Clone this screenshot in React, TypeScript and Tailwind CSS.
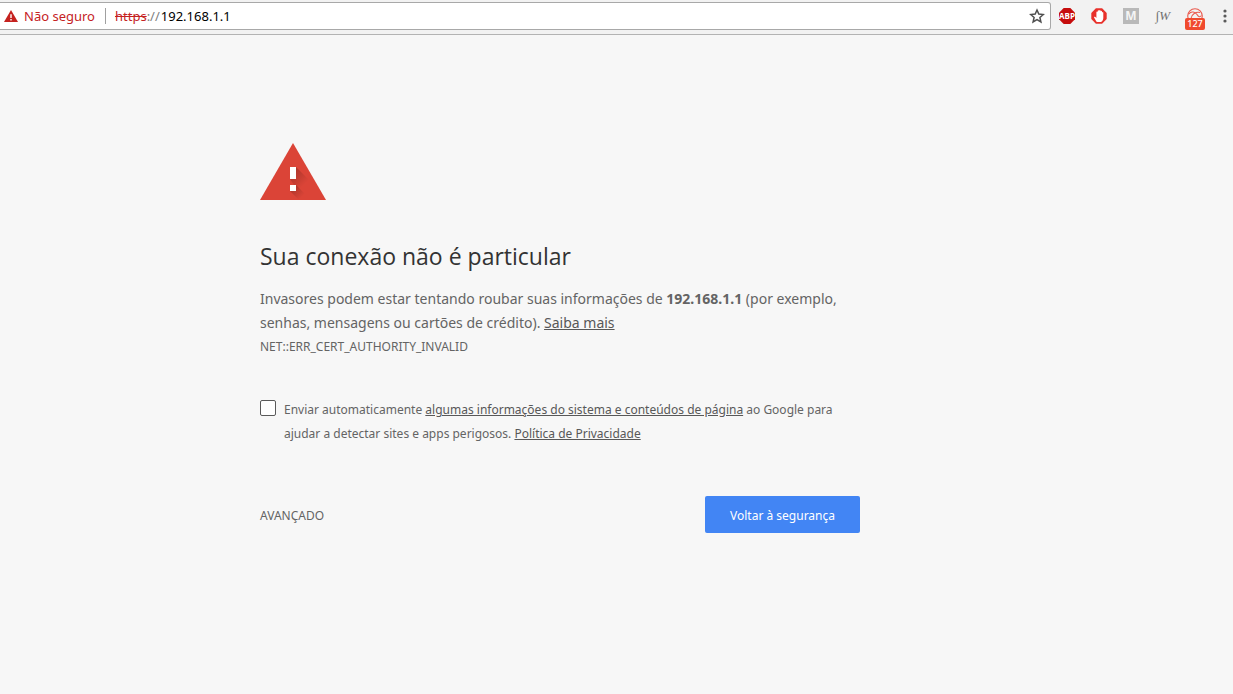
import React, { useState } from 'react';

interface ExtensionProps {
  label: string;
  children: React.ReactNode;
}

const Extension: React.FC<ExtensionProps> = ({ label, children }) => (
  <button type="button" aria-label={label} className="relative flex h-8 w-8 shrink-0 items-center justify-center">
    {children}
  </button>
);

const AdblockPlusIcon = () => (
  <svg viewBox="0 0 16 16" className="h-4 w-4">
    <path d="M4.7 0h6.6L16 4.7v6.6L11.3 16H4.7L0 11.3V4.7z" fill="#c60d0d" />
    <text x="8" y="10.8" textAnchor="middle" fill="#fff" fontSize="8" fontWeight="bold" fontFamily="Open Sans, sans-serif">ABP</text>
  </svg>
);

const AdblockIcon = () => (
  <svg viewBox="0 0 16 16" className="h-4 w-4">
    <path d="M4.9.3h6.2l4.6 4.6v6.2l-4.6 4.6H4.9L.3 11.1V4.9z" fill="#e8312b" />
    <path
      d="M5.500 13.700 3.200 9.800c-.5-.9.5-1.500 1.200-.8l1 1V4.200c0-.9 1.300-.9 1.300 0V3c0-1 1.400-1 1.400 0v-.2c0-1 1.500-1 1.500 0v.8c0-1 1.400-1 1.400 0v1.100c0-.9 1.300-.9 1.300 0v5.400c0 1.800-1 3.600-2.400 4H7.500c-.9 0-1.500 0-2-.4z"
      fill="#fff"
    />
  </svg>
);

const SpeedIcon = () => (
  <svg viewBox="0 0 16 16" className="h-4 w-4" fill="none" stroke="#ea5a4e" strokeWidth="1.100">
    <circle cx="8" cy="8" r="7.300" />
    <path d="M2 6C4 2.500 8.500 4 10 6.500s3 3 4.500 1M4 10.500C4.500 6 9 3.500 13 4.500" />
  </svg>
);

const StarIcon = () => (
  <svg viewBox="0 0 16 16" className="h-4 w-4">
    <path
      d="m8 2 1.800 4.100 4.500.4-3.400 3 1 4.400L8 11.600l-3.900 2.300 1-4.400-3.400-3 4.500-.4z"
      fill="none"
      stroke="#4f4f4f"
      strokeWidth="1.500"
    />
  </svg>
);

const Toolbar = () => {
  const [host, setHost] = useState('192.168.1.1');

  return (
    <header className="flex h-[35px] items-start border-b border-[#b3b3b3] bg-[#f2f2f2]">
      <div className="mt-[2px] flex h-7 flex-1 items-center rounded-r-[3px] border border-l-0 border-[#a8a8a8] bg-white pl-1 pr-[5px] text-[13px] leading-5">
        <svg viewBox="0 0 14 12" className="h-3 w-3.5 shrink-0">
          <path d="M7 0 14 12H0z" fill="#c5221f" />
          <path d="M6.300 4.300h1.400v3.700H6.300zM6.300 9h1.400v1.500H6.300z" fill="#fff" />
        </svg>
        <span className="ml-1.5 text-[#c5221f]">Não seguro</span>
        <span className="ml-2.5 mr-[9px] h-4 w-px bg-[#a0a0a0]" />
        <label htmlFor="address" className="text-[#808080]">
          <span className="text-[#c5221f] line-through">https</span>://
        </label>
        <input
          id="address"
          value={host}
          onChange={(e) => setHost(e.target.value)}
          className="ml-px min-w-0 flex-1 bg-transparent text-black outline-none"
        />
        <button type="button" aria-label="Adicionar aos favoritos">
          <StarIcon />
        </button>
      </div>

      <Extension label="Adblock Plus">
        <AdblockPlusIcon />
      </Extension>
      <Extension label="AdBlock">
        <AdblockIcon />
      </Extension>
      <Extension label="M">
        <span className="flex h-4 w-4 items-center justify-center bg-[#b9b9b9] text-xs font-bold text-[#f4f4f4]">M</span>
      </Extension>
      <Extension label="WhatFont">
        <span className="font-['Liberation_Serif',serif] text-[13px] italic leading-4 text-[#707070]">∫W</span>
      </Extension>
      <Extension label="127 bloqueios">
        <SpeedIcon />
        <span className="absolute left-1.5 top-[18px] h-3 w-5 rounded-[2px] bg-[#f04a2e] text-center text-[9px] font-medium leading-3 text-white">127</span>
      </Extension>
      <button type="button" aria-label="Menu" className="flex h-8 w-[22px] items-center justify-end pr-1.5">
        <svg viewBox="0 0 4 14" className="h-3.5 w-1" fill="#5a5a5a">
          <circle cx="2" cy="2" r="1.600" />
          <circle cx="2" cy="7" r="1.600" />
          <circle cx="2" cy="12" r="1.600" />
        </svg>
      </button>
    </header>
  );
};

const WarningIcon = () => (
  <svg viewBox="0 0 66 57" className="h-[57px] w-[66px]">
    <defs>
      <linearGradient id="barShade" gradientUnits="userSpaceOnUse" x1="34" y1="28" x2="46" y2="40">
        <stop offset="0" stopColor="#000" stopOpacity=".2" />
        <stop offset="1" stopColor="#000" stopOpacity="0" />
      </linearGradient>
      <linearGradient id="dotShade" gradientUnits="userSpaceOnUse" x1="33" y1="45" x2="42" y2="54">
        <stop offset="0" stopColor="#000" stopOpacity=".2" />
        <stop offset="1" stopColor="#000" stopOpacity="0" />
      </linearGradient>
    </defs>
    <path d="M33 0 66 57H0z" fill="#db4437" />
    <path d="m36 24 17 17v12L36 36l-6 0 6-6z" fill="url(#barShade)" />
    <path d="M30 36h6l12 12-6 6-6-12h-2z" fill="url(#barShade)" />
    <path d="m36 42 15 15H39l-9-9z" fill="url(#dotShade)" />
    <path d="M30 24h6v12h-6zM30 42h6v6h-6z" fill="#fff" />
  </svg>
);

const App: React.FC = () => {
  const [report, setReport] = useState(false);

  return (
    <div className="min-h-screen bg-[#f7f7f7] font-['Noto_Sans','Open_Sans',sans-serif] text-[#646464]">
      <Toolbar />

      <main className="ml-[260px] mr-6 max-w-[600px] pt-27">
        <WarningIcon />
        <h1 className="mt-10 font-['Open_Sans',sans-serif] text-[23px] leading-8 text-[#333]">Sua conexão não é particular</h1>

        <p className="mt-[15px] text-sm leading-6">
          Invasores podem estar tentando roubar suas informações de <strong>192.168.1.1</strong> (por exemplo, senhas,
          mensagens ou cartões de crédito).{' '}
          <a href="#saiba-mais" className="text-[#585858] underline">Saiba mais</a>
        </p>
        <div className="text-xs leading-6">NET::ERR_CERT_AUTHORITY_INVALID</div>

        <div className="mt-[39px] flex items-start gap-2 text-xs leading-6">
          <input
            id="report"
            type="checkbox"
            checked={report}
            onChange={(e) => setReport(e.target.checked)}
            className="mt-[2px] h-4 w-4 shrink-0 appearance-none rounded-[2px] border border-[#5a5a5a] bg-white checked:bg-[#4285f4]"
          />
          <label htmlFor="report">
            Enviar automaticamente{' '}
            <a href="#informacoes" className="text-[#585858] underline">algumas informações do sistema e conteúdos de página</a>{' '}
            ao Google para ajudar a detectar sites e apps perigosos.{' '}
            <a href="#privacidade" className="text-[#585858] underline">Política de Privacidade</a>
          </label>
        </div>

        <div className="mt-[50px] flex items-center justify-between text-xs leading-4">
          <button type="button" className="pt-0.5 uppercase">Avançado</button>
          <button type="button" className="h-[37px] rounded-[2px] bg-[#4285f4] px-[25px] pt-0.5 text-white">Voltar à segurança</button>
        </div>
      </main>
    </div>
  );
};

export default App;
